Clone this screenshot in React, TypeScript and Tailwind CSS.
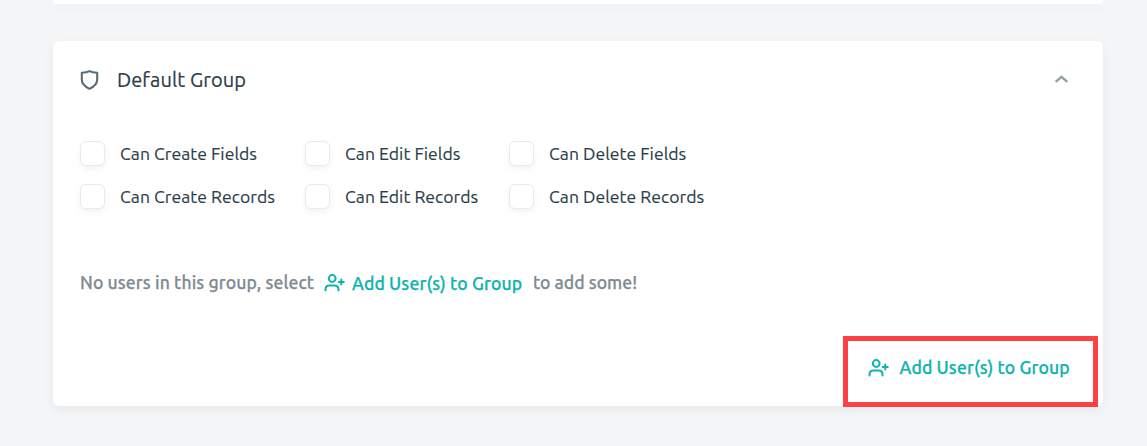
import React from "react";

const permissions = [
  "Can Create Fields",
  "Can Edit Fields",
  "Can Delete Fields",
  "Can Create Records",
  "Can Edit Records",
  "Can Delete Records",
];

function ShieldIcon() {
  return (
    <svg className="h-5 w-[19px] shrink-0" viewBox="0 0 19 20" fill="none" stroke="#5d6b75" strokeWidth="2.1" strokeLinejoin="round">
      <path d="M9.5 1.1C7.3 2.2 4.6 2.6 1.8 2.8V9.6C1.8 13.9 5 16.8 9.5 18.9C14 16.8 17.2 13.9 17.2 9.6V2.8C14.4 2.6 11.7 2.2 9.5 1.1Z" />
    </svg>
  );
}

function UserPlusIcon() {
  return (
    <svg className="h-[18px] w-[21px] shrink-0" viewBox="0 0 21 18" fill="none" stroke="currentColor" strokeWidth="2" strokeLinecap="round" strokeLinejoin="round">
      <circle cx="8.2" cy="4.5" r="3.4" />
      <path d="M1.5 16.4V15.4C1.5 13 3.1 11.5 5.5 11.5H10.5C12.9 11.5 14.5 13 14.5 15.4V16.4" />
      <path d="M17.3 5.5V10.5M14.7 8H19.8" />
    </svg>
  );
}

export default function App() {
  return (
    <div className="h-[446px] overflow-hidden bg-[#f4f5f7] pl-[53px] font-['Ubuntu','Noto_Sans',sans-serif] text-[#2b3d49]">
      <div className="h-1 w-[1050px] rounded-b-[6px] bg-white shadow-[0_4px_12px_rgba(0,0,0,0.05)]" />
      <section className="mt-[37px] flex h-[365px] w-[1050px] flex-col rounded-[6px] bg-white shadow-[0_4px_12px_rgba(0,0,0,0.05)]">
        <header className="flex h-[78px] shrink-0 items-center pr-[34px] pl-[27px]">
          <ShieldIcon />
          <h2 className="ml-[18px] text-[20px] leading-7 tracking-[0.1px] whitespace-nowrap [-webkit-text-stroke:0.2px_currentColor]">Default Group</h2>
          <svg className="mb-px ml-auto h-[9px] w-[15px]" viewBox="0 0 15 9" fill="none" stroke="#94a0a8" strokeWidth="2.5">
            <path d="M1.7 6.9L7.5 1.8L13.3 6.9" />
          </svg>
        </header>
        <div className="mt-[22px] grid shrink-0 grid-cols-[225px_204px_220px] gap-y-[18px] pl-[27px]">
          {permissions.map((label) => (
            <label key={label} className="flex h-[25px] items-center">
              <span className="size-[25px] shrink-0 rounded-[6px] border border-[#e8eaec] bg-white shadow-[0_3px_6px_rgba(0,0,0,0.05)]" />
              <span className="ml-[15px] text-[17.6px] leading-6 tracking-[0.03px] whitespace-nowrap [-webkit-text-stroke:0.15px_currentColor]">{label}</span>
            </label>
          ))}
        </div>
        <div className="mt-[60px] flex h-7 shrink-0 items-center pl-[27px] text-[17.6px] leading-7 font-medium whitespace-nowrap text-[#7f8b93] [-webkit-text-stroke:0.25px_currentColor]">
          <span className="w-[244px] tracking-[0.09px]">No users in this group, select</span>
          <button className="flex w-[209px] items-center text-[#10b3af]">
            <UserPlusIcon />
            <span className="ml-[7px] pt-px tracking-[0.11px]">Add User(s) to Group</span>
          </button>
          <span>to add some!</span>
        </div>
        <div className="mt-[39px] mr-[5px] flex h-[71px] w-[255px] shrink-0 items-center self-end border-[5px] border-[#ff4043] pb-[7px] pl-5 text-[17.6px] leading-7 font-medium text-[#10b3af] [-webkit-text-stroke:0.25px_currentColor]">
          <UserPlusIcon />
          <span className="ml-[10.5px] tracking-[0.11px] whitespace-nowrap">Add User(s) to Group</span>
        </div>
      </section>
    </div>
  );
}
